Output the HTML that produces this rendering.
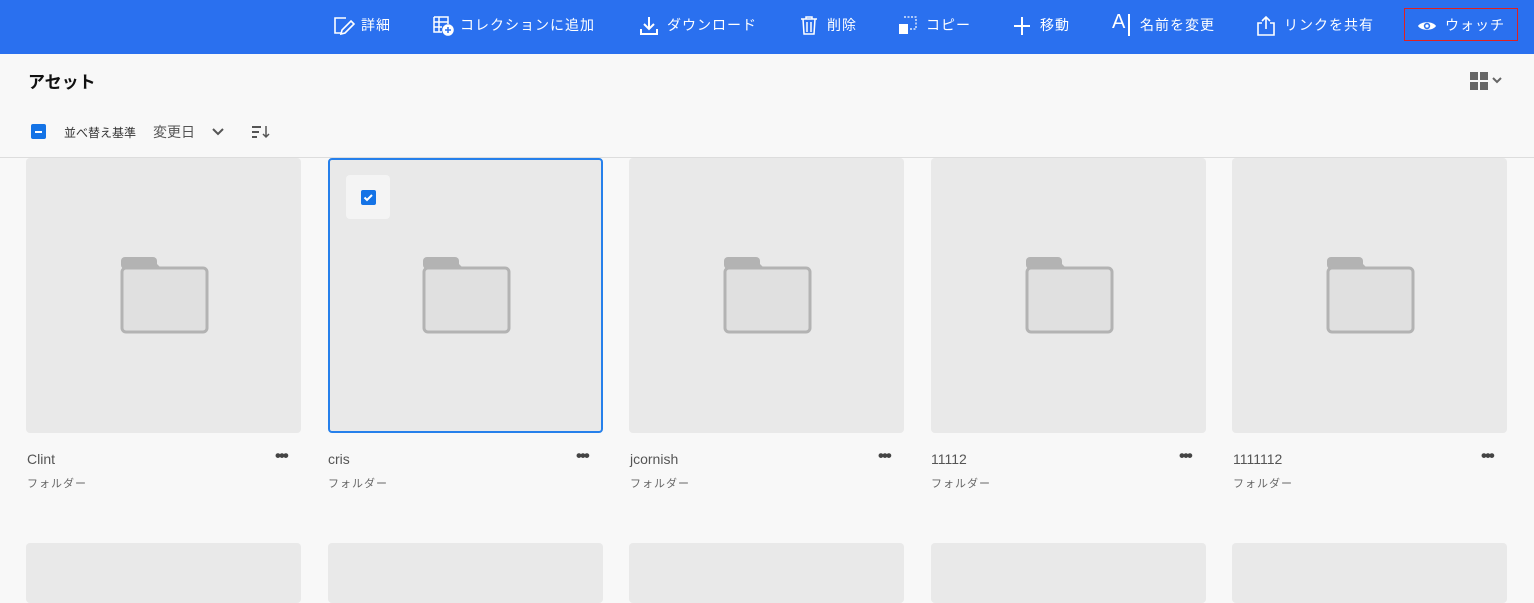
<!DOCTYPE html>
<html><head><meta charset="utf-8"><style>
*{margin:0;padding:0;box-sizing:border-box}
body{width:1534px;height:591px;overflow:hidden;background:#f8f8f8;font-family:"Liberation Sans","Noto Sans CJK JP",sans-serif;position:relative}
.bar{position:absolute;left:0;top:0;width:1534px;height:54px;background:#2a70ef}
.t{position:absolute;top:16px;color:#fff;font-size:14px;line-height:18px;white-space:nowrap;letter-spacing:1px}
.i{position:absolute;top:15px}
.card{position:absolute;top:158px;width:275px;height:275px;background:#e9e9e9;border-radius:4px}
.card2{position:absolute;top:543px;width:275px;height:60px;background:#e9e9e9;border-radius:4px}
.name{position:absolute;top:451px;font-size:14px;color:#555}
.sub{position:absolute;top:475px;font-size:11px;color:#666;letter-spacing:1px}
.dots{position:absolute;top:446px;font-size:17px;color:#444;letter-spacing:-2px;font-weight:bold}
.fold{position:absolute;left:94px;top:98px}
</style></head><body>
<div class="bar"></div>
<svg class="i" style="left:333px" width="22" height="22" viewBox="0 0 22 22" fill="none" stroke="#fff" stroke-width="1.6"><path d="M13 3H2v15h7"/><path d="M18 6l3 3-9 9-4 1 1-4z"/></svg><span class="t" style="left:361px">詳細</span>
<svg class="i" style="left:433px" width="22" height="22" viewBox="0 0 22 22" fill="none" stroke="#fff" stroke-width="1.5"><path d="M1 2h14v7M1 2v15h8M6 2v15M1 7h14M1 12h8"/><circle cx="15" cy="15" r="5" fill="#fff"/><path d="M15 12v6M12 15h6" stroke="#2a70ef"/></svg><span class="t" style="left:460px">コレクションに追加</span>
<svg class="i" style="left:639px" width="20" height="22" viewBox="0 0 20 22" fill="none" stroke="#fff" stroke-width="2"><path d="M10 2v12M5 9l5 5 5-5M2 14v5h16v-5"/></svg><span class="t" style="left:667px">ダウンロード</span>
<svg class="i" style="left:800px" width="18" height="22" viewBox="0 0 18 22" fill="none" stroke="#fff" stroke-width="1.5"><path d="M1 4h16M6 4V2h6v2M3 4l1 15h10l1-15M7 7v10M11 7v10"/></svg><span class="t" style="left:827px">削除</span>
<svg class="i" style="left:898px" width="20" height="22" viewBox="0 0 20 22"><rect x="1" y="9" width="9" height="10" fill="#fff"/><path d="M6 2h12v12H11" fill="none" stroke="#fff" stroke-width="1.2" stroke-dasharray="2 1.5"/></svg><span class="t" style="left:926px">コピー</span>
<svg class="i" style="left:1013px" width="18" height="22" viewBox="0 0 18 22" fill="none" stroke="#fff" stroke-width="2"><path d="M9 2v18M1 11h16"/></svg><span class="t" style="left:1040px">移動</span>
<span class="t" style="left:1112px;top:13px;font-size:20px">A</span><div style="position:absolute;left:1128px;top:14px;width:1.5px;height:22px;background:#fff"></div><span class="t" style="left:1140px">名前を変更</span>
<svg class="i" style="left:1256px" width="20" height="22" viewBox="0 0 20 22" fill="none" stroke="#fff" stroke-width="1.6"><path d="M6 8H2v12h16V8h-4M10 14V2M6 6l4-4 4 4"/></svg><span class="t" style="left:1284px">リンクを共有</span>
<div style="position:absolute;left:1404px;top:8px;width:114px;height:33px;border:1.5px solid #e02020"></div>
<svg class="i" style="left:1417px;top:17px" width="20" height="18" viewBox="0 0 20 18"><path d="M1 9c3-5 15-5 18 0-3 5-15 5-18 0z" fill="#fff"/><circle cx="10" cy="9" r="3.2" fill="#2a70ef"/><circle cx="10" cy="9" r="1.6" fill="#fff"/></svg><span class="t" style="left:1445px">ウォッチ</span>

<div style="position:absolute;left:28px;top:68px;font-size:17px;font-weight:bold;color:#111">アセット</div>
<svg style="position:absolute;left:1469px;top:71px" width="38" height="20" viewBox="0 0 38 20"><g fill="#666"><rect x="1" y="1" width="8" height="8"/><rect x="11" y="1" width="8" height="8"/><rect x="1" y="11" width="8" height="8"/><rect x="11" y="11" width="8" height="8"/></g><path d="M24 7l4 4 4-4" fill="none" stroke="#666" stroke-width="2"/></svg>

<div style="position:absolute;left:31px;top:124px;width:15px;height:15px;background:#1473e6;border-radius:2px"><div style="position:absolute;left:4px;top:6.5px;width:7px;height:2px;background:#fff"></div></div>
<div style="position:absolute;left:64px;top:124px;font-size:12px;color:#333">並べ替え基準</div>
<div style="position:absolute;left:153px;top:122px;font-size:14px;color:#555">変更日</div>
<svg style="position:absolute;left:211px;top:127px" width="14" height="10"><path d="M2 2l5 5 5-5" fill="none" stroke="#555" stroke-width="2"/></svg>
<svg style="position:absolute;left:251px;top:124px" width="20" height="16"><path d="M1 3h9M1 8h7M1 13h5" stroke="#555" stroke-width="2"/><path d="M15 2v11M12 10l3 3 3-3" fill="none" stroke="#555" stroke-width="1.5"/></svg>
<div style="position:absolute;left:0;top:157px;width:1534px;height:1px;background:#ddd"></div>

<div class="card" style="left:26px"><svg class="fold" width="90" height="80" viewBox="0 0 90 80"><rect x="1" y="1" width="36" height="12" rx="4" fill="#b3b3b3"/><path d="M30 1l10 10H30z" fill="#b3b3b3"/><rect x="2" y="12" width="85" height="64" rx="4" fill="#e0e0e0" stroke="#b3b3b3" stroke-width="3"/></svg></div>
<div class="card" style="left:328px;border:2px solid #2680eb"><div style="position:absolute;left:16px;top:15px;width:44px;height:44px;background:#f4f4f4;border-radius:4px"><div style="position:absolute;left:15px;top:15px;width:15px;height:15px;background:#1473e6;border-radius:2px"><svg width="15" height="15" style="position:absolute;left:0;top:0"><path d="M3.5 7.5l2.5 2.5 5-5" fill="none" stroke="#fff" stroke-width="2"/></svg></div></div><svg class="fold" style="left:92px;top:96px" width="90" height="80" viewBox="0 0 90 80"><rect x="1" y="1" width="36" height="12" rx="4" fill="#b3b3b3"/><path d="M30 1l10 10H30z" fill="#b3b3b3"/><rect x="2" y="12" width="85" height="64" rx="4" fill="#e0e0e0" stroke="#b3b3b3" stroke-width="3"/></svg></div>
<div class="card" style="left:629px"><svg class="fold" width="90" height="80" viewBox="0 0 90 80"><rect x="1" y="1" width="36" height="12" rx="4" fill="#b3b3b3"/><path d="M30 1l10 10H30z" fill="#b3b3b3"/><rect x="2" y="12" width="85" height="64" rx="4" fill="#e0e0e0" stroke="#b3b3b3" stroke-width="3"/></svg></div>
<div class="card" style="left:931px"><svg class="fold" width="90" height="80" viewBox="0 0 90 80"><rect x="1" y="1" width="36" height="12" rx="4" fill="#b3b3b3"/><path d="M30 1l10 10H30z" fill="#b3b3b3"/><rect x="2" y="12" width="85" height="64" rx="4" fill="#e0e0e0" stroke="#b3b3b3" stroke-width="3"/></svg></div>
<div class="card" style="left:1232px"><svg class="fold" width="90" height="80" viewBox="0 0 90 80"><rect x="1" y="1" width="36" height="12" rx="4" fill="#b3b3b3"/><path d="M30 1l10 10H30z" fill="#b3b3b3"/><rect x="2" y="12" width="85" height="64" rx="4" fill="#e0e0e0" stroke="#b3b3b3" stroke-width="3"/></svg></div>

<div class="name" style="left:27px">Clint</div><div class="dots" style="left:275px">•••</div><div class="sub" style="left:27px">フォルダー</div>
<div class="name" style="left:328px">cris</div><div class="dots" style="left:576px">•••</div><div class="sub" style="left:328px">フォルダー</div>
<div class="name" style="left:630px">jcornish</div><div class="dots" style="left:878px">•••</div><div class="sub" style="left:630px">フォルダー</div>
<div class="name" style="left:931px">11112</div><div class="dots" style="left:1179px">•••</div><div class="sub" style="left:931px">フォルダー</div>
<div class="name" style="left:1233px">1111112</div><div class="dots" style="left:1481px">•••</div><div class="sub" style="left:1233px">フォルダー</div>

<div class="card2" style="left:26px"></div><div class="card2" style="left:328px"></div><div class="card2" style="left:629px"></div><div class="card2" style="left:931px"></div><div class="card2" style="left:1232px"></div>
</body></html>
